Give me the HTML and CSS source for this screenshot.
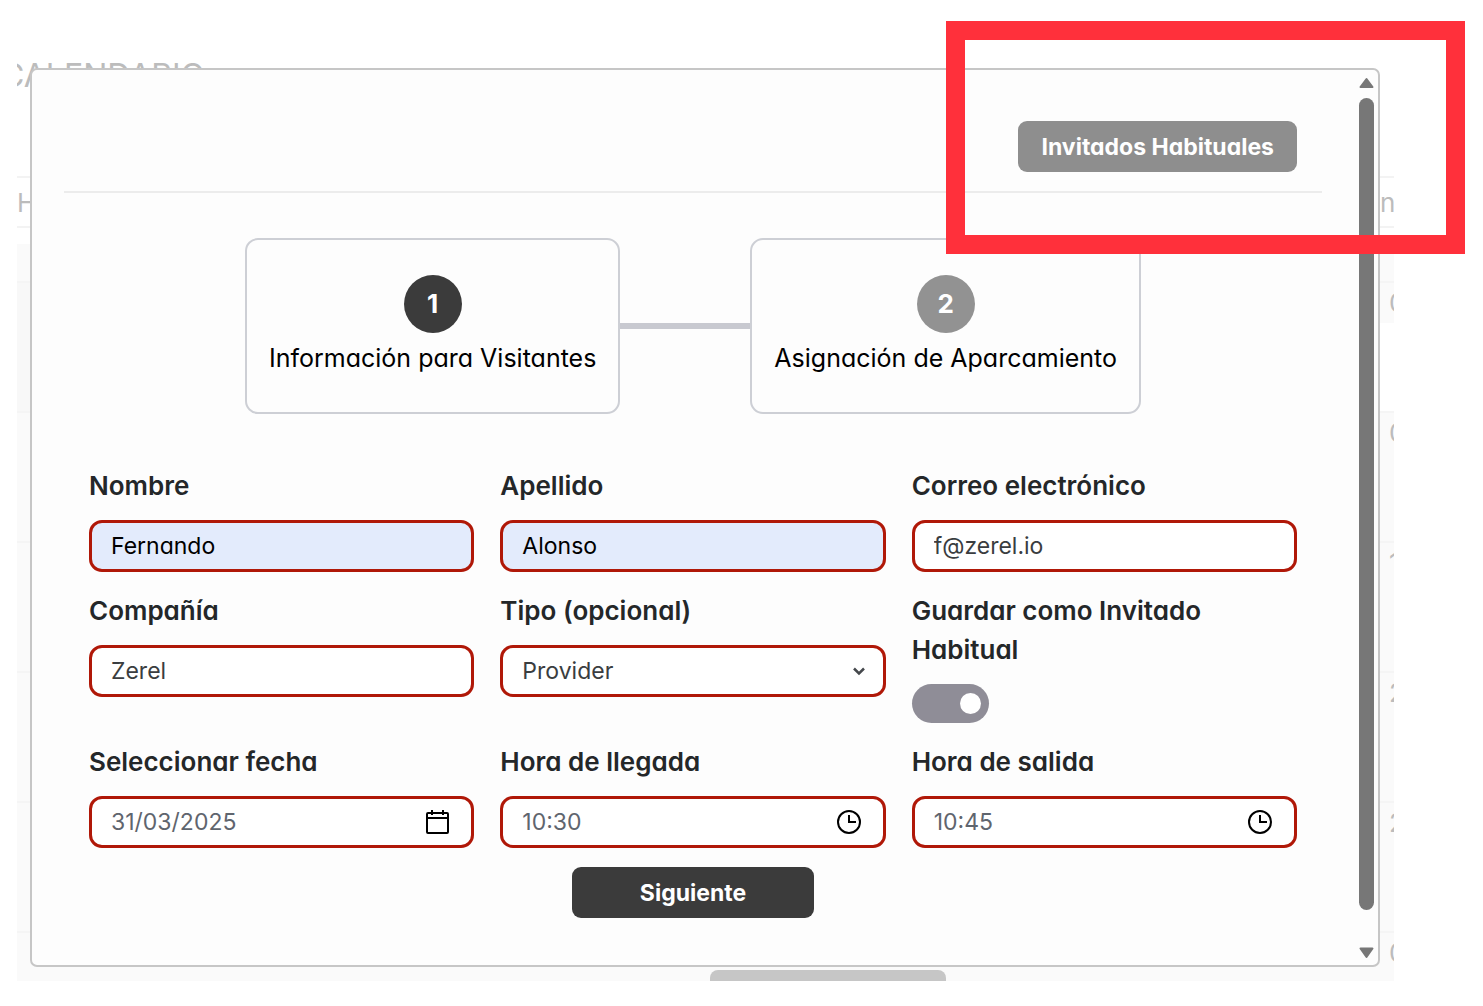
FILE: index.html
```
<!DOCTYPE html>
<html lang="es">

<head>
  <meta charset="UTF-8">
  <meta name="viewport" content="width=device-width, initial-scale=1.0">
  <title>Invitados</title>
  <link rel="stylesheet" href="styles.css">
</head>

<body>
  <div class="screen">
    <!-- Calendar behind the dialog -->
    <div class="calendar">
      <h1 class="calendar-title">CALENDARIO</h1>
      <div class="calendar-head"><span>H</span><span class="day">n</span></div>
      <div class="calendar-allday"></div>
      <div class="calendar-row first"><span class="day">0</span></div>
      <div class="calendar-row"><span class="day">0</span></div>
      <div class="calendar-row"><span class="day">1</span></div>
      <div class="calendar-row"><span class="day">2</span></div>
      <div class="calendar-row"><span class="day">2</span></div>
      <div class="calendar-row last">
        <button class="calendar-button" aria-label="Calendario"></button>
        <span class="day">0</span>
      </div>
    </div>

    <div class="modal" role="dialog">
      <div class="modal-content">
        <div class="modal-header">
          <button class="button button-secondary">Invitados Habituales</button>
        </div>

        <div class="steps">
          <div class="step active">
            <span class="step-number">1</span>
            <span class="step-name">Información para Visitantes</span>
          </div>
          <div class="step-line"></div>
          <div class="step">
            <span class="step-number">2</span>
            <span class="step-name">Asignación de Aparcamiento</span>
          </div>
        </div>

        <form class="form">
          <div class="field">
            <label for="nombre">Nombre</label>
            <input class="control autofilled" type="text" id="nombre" value="Fernando">
          </div>
          <div class="field">
            <label for="apellido">Apellido</label>
            <input class="control autofilled" type="text" id="apellido" value="Alonso">
          </div>
          <div class="field">
            <label for="correo">Correo electrónico</label>
            <input class="control" type="email" id="correo" value="f@zerel.io">
          </div>

          <div class="field">
            <label for="compania">Compañía</label>
            <input class="control" type="text" id="compania" value="Zerel">
          </div>
          <div class="field">
            <label for="tipo">Tipo (opcional)</label>
            <div class="control-wrap">
              <select class="control" id="tipo">
                <option>Provider</option>
              </select>
              <svg class="icon chevron" viewBox="0 0 14 14" aria-hidden="true">
                <path d="M2 4.5l5 5 5-5" />
              </svg>
            </div>
          </div>
          <div class="field">
            <label for="guardar">Guardar como Invitado Habitual</label>
            <input class="toggle" type="checkbox" id="guardar" checked>
          </div>

          <div class="field">
            <label for="fecha">Seleccionar fecha</label>
            <div class="control-wrap">
              <input class="control muted" type="text" id="fecha" value="31/03/2025">
              <svg class="icon" viewBox="0 0 26 26" aria-hidden="true">
                <rect x="3" y="4" width="21" height="20" rx="1" />
                <path d="M3 9h21M8 1v5M19 1v5" />
              </svg>
            </div>
          </div>
          <div class="field">
            <label for="llegada">Hora de llegada</label>
            <div class="control-wrap">
              <input class="control muted" type="text" id="llegada" value="10:30">
              <svg class="icon" viewBox="0 0 26 26" aria-hidden="true">
                <circle cx="13" cy="13" r="11" />
                <path d="M13 6v7h7" />
              </svg>
            </div>
          </div>
          <div class="field">
            <label for="salida">Hora de salida</label>
            <div class="control-wrap">
              <input class="control muted" type="text" id="salida" value="10:45">
              <svg class="icon" viewBox="0 0 26 26" aria-hidden="true">
                <circle cx="13" cy="13" r="11" />
                <path d="M13 6v7h7" />
              </svg>
            </div>
          </div>

          <button class="button button-primary" type="button">Siguiente</button>
        </form>
      </div>

      <div class="scrollbar">
        <svg class="scroll-arrow" viewBox="0 0 15 12" aria-hidden="true">
          <path d="M7.5 2L13.5 10H1.5z" />
        </svg>
        <div class="scroll-thumb"></div>
        <svg class="scroll-arrow" viewBox="0 0 15 12" aria-hidden="true">
          <path d="M7.5 10L13.5 1.5H1.5z" />
        </svg>
      </div>
    </div>

    <div class="highlight"></div>
  </div>
</body>

</html>
```
FILE: styles.css
```
* {
  box-sizing: border-box;
  margin: 0;
  padding: 0;
}

body {
  font-family: Inter, 'Liberation Sans', sans-serif;
  font-feature-settings: 'cv11';
  font-size: 26px;
  line-height: 39px;
  color: #000;
  background-color: #fff;
}

/* calendar and dialog share one grid cell */
.screen {
  position: relative;
  display: grid;
  padding: 0 89px 26px 17px;
}

.calendar,
.modal {
  grid-area: 1 / 1;
  min-width: 0;
}

.calendar {
  overflow: hidden;
  padding-top: 56px;
  color: #bcbcbc;
}

.calendar-title {
  height: 120px;
  font-size: 32px;
  font-weight: 400;
  text-indent: -16px;
}

.calendar-head {
  display: flex;
  justify-content: space-between;
  height: 52px;
  padding-top: 5px;
  border-top: 2px solid #f3f3f3;
  border-bottom: 2px solid #f3f3f3;
}

.calendar-head .day {
  padding-left: 0;
}

.calendar-allday {
  height: 37px;
  margin-top: 16px;
  background-color: #fafafa;
}

.calendar-row {
  display: flex;
  justify-content: flex-end;
  height: 130px;
  border-top: 2px solid #f5f5f5;
  background-color: #fafafa;
}

.calendar-row.first {
  background: linear-gradient(to right, #f8f8f8 50%, transparent 50%), linear-gradient(#fafafa 40px, #fff 40px);
}

.calendar-row.last {
  align-items: flex-start;
  height: 50px;
}

.calendar-button {
  width: 236px;
  height: 40px;
  margin: 37px 434px 0 0;
  border: none;
  border-radius: 8px;
  background-color: #c6c6c6;
}

.day {
  width: 14px;
  padding-left: 9px;
  overflow: hidden;
}

.modal {
  display: flex;
  margin: 68px 14px 14px 13px;
  border: 2px solid #c6c6c6;
  border-radius: 7px;
  background-color: #fdfdfd;
}

.modal-content {
  flex: 1;
  padding: 0 0 45px 32px;
}

.modal-header {
  display: flex;
  justify-content: flex-end;
  padding: 51px 25px 19px;
  border-bottom: 2px solid #ececec;
}

.button {
  height: 51px;
  border: none;
  border-radius: 9px;
  font-family: inherit;
  font-feature-settings: inherit;
  font-size: 23px;
  font-weight: 700;
  color: #fff;
  cursor: pointer;
}

.button-primary {
  grid-column: 1 / -1;
  justify-self: center;
  width: 242px;
  background-color: #3b3b3b;
}

.button-secondary {
  padding: 0 23px;
  background-color: #8e8e8e;
}

.steps {
  display: flex;
  justify-content: center;
  align-items: center;
  padding: 45px 0 52px;
}

.step {
  display: flex;
  flex-direction: column;
  align-items: center;
  gap: 6px;
  padding: 35px 22px 34px;
  border: 2px solid #cdcfd5;
  border-radius: 13px;
}

.step-number {
  width: 58px;
  border-radius: 50%;
  background-color: #929292;
  color: #fff;
  font-weight: 700;
  line-height: 58px;
  text-align: center;
}

.step-name {
  font-size: 25px;
}

.step.active .step-number {
  background-color: #3b3b3b;
}

.step-line {
  width: 130px;
  height: 6px;
  background-color: #c8c9d0;
}

.form {
  display: grid;
  grid-template-columns: repeat(3, 1fr);
  gap: 19px 26px;
  padding: 0 25px;
}

.field {
  display: flex;
  flex-direction: column;
  align-items: flex-start;
  gap: 15px;
  min-width: 0;
}

.field label {
  font-weight: 600;
  color: #242729;
}

.control-wrap {
  position: relative;
  width: 100%;
}

.control {
  display: block;
  width: 100%;
  height: 52px;
  padding: 0 19px;
  border: 3px solid #b01808;
  border-radius: 13px;
  background-color: #fff;
  color: #3a3d40;
  font-family: inherit;
  font-feature-settings: inherit;
  font-size: 23px;
  appearance: none;
}

.control.autofilled {
  background-color: #e3ebfc;
  color: #000;
}

.control.muted {
  color: #5f656e;
}

.icon {
  position: absolute;
  top: 13px;
  right: 24px;
  width: 26px;
  height: 26px;
  fill: none;
  stroke: #000;
  stroke-width: 2;
  pointer-events: none;
}

.icon.chevron {
  top: 19px;
  right: 20px;
  width: 14px;
  height: 14px;
  stroke: #45484c;
  stroke-width: 2.5;
}

.toggle {
  width: 77px;
  height: 39px;
  padding: 9px 8px;
  border-radius: 20px;
  background-color: #8f8d97;
  appearance: none;
  cursor: pointer;
}

.toggle::before {
  content: '';
  display: block;
  width: 21px;
  height: 21px;
  border-radius: 50%;
  background-color: #fff;
}

.toggle:checked::before {
  margin-left: auto;
}

.scrollbar {
  display: flex;
  flex-direction: column;
  align-items: center;
  width: 56px;
  padding: 7px 4px 6px 37px;
}

.scroll-arrow {
  width: 15px;
  height: 12px;
  fill: #777;
  stroke: #777;
  stroke-width: 2;
  stroke-linejoin: round;
}

.scroll-thumb {
  flex: 1;
  width: 15px;
  margin: 9px 0 37px;
  border-radius: 8px;
  background-color: #777;
}

.highlight {
  position: absolute;
  top: 21px;
  right: 18px;
  width: 519px;
  height: 233px;
  border: 19px solid #ff303b;
}
```
